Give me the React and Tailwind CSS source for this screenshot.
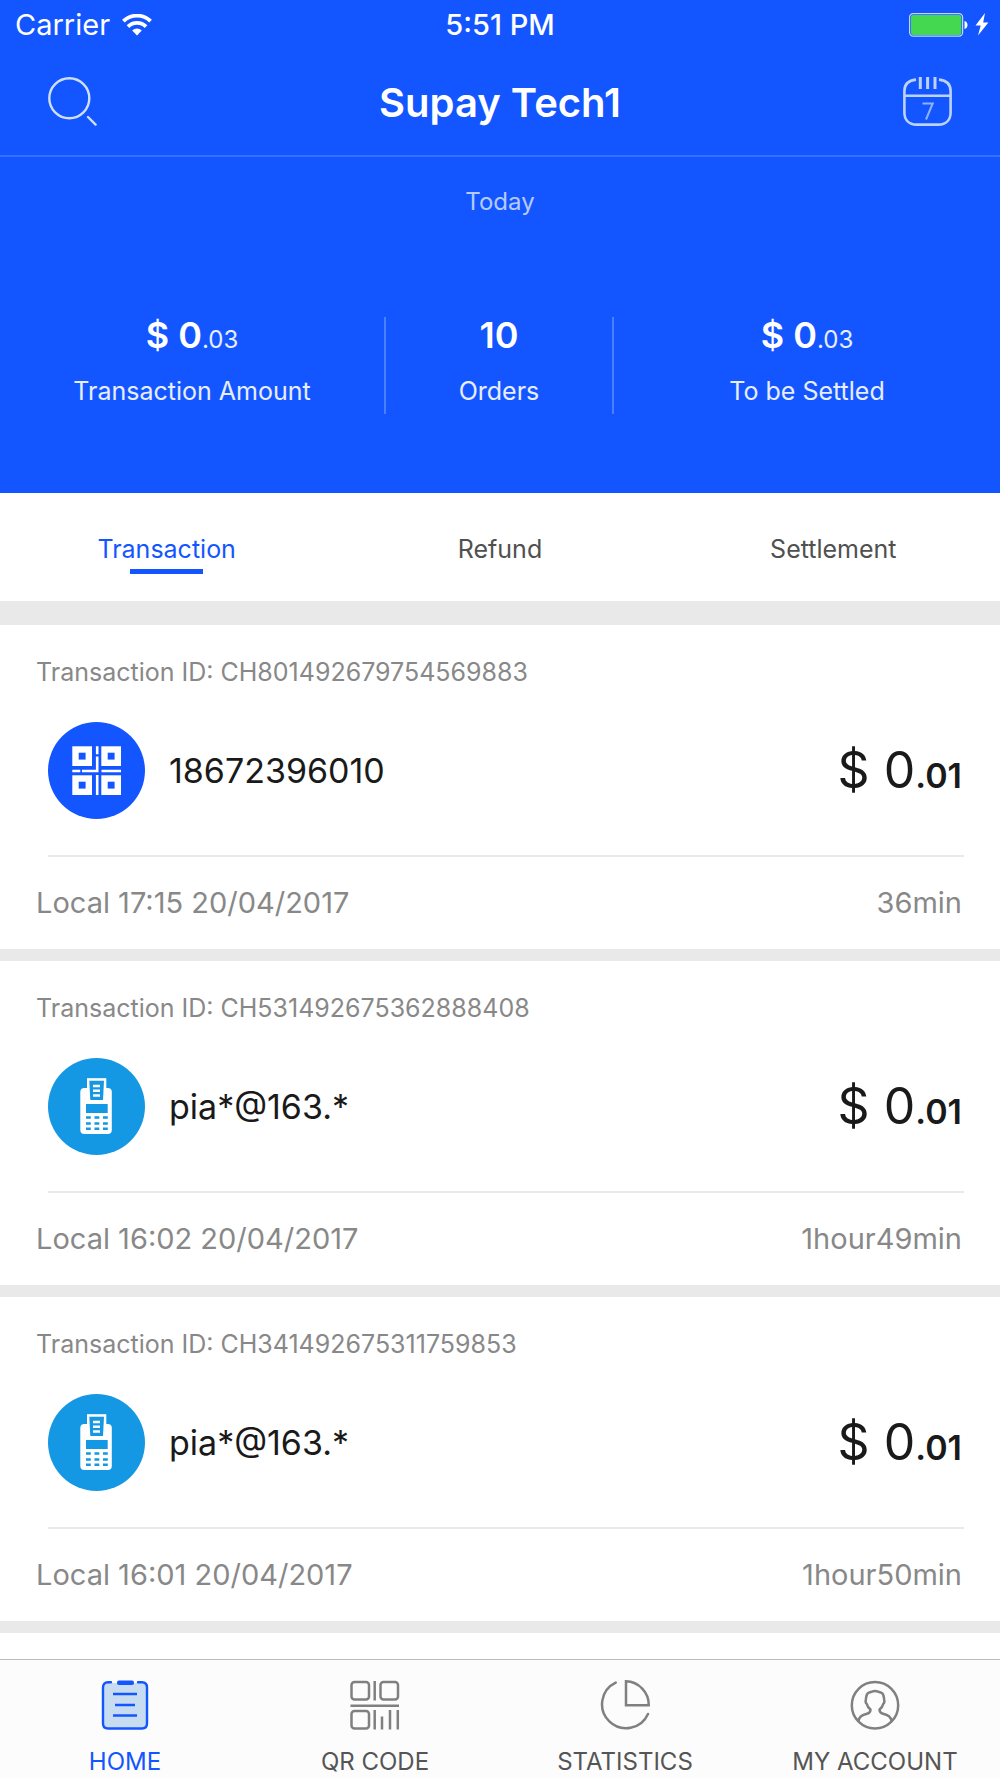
import { useState } from 'react'

const transactions = [
  { id: 'CH801492679754569883', type: 'qr', name: '18672396010', time: 'Local 17:15 20/04/2017', ago: '36min' },
  { id: 'CH531492675362888408', type: 'pos', name: 'pia*@163.*', time: 'Local 16:02 20/04/2017', ago: '1hour49min' },
  { id: 'CH341492675311759853', type: 'pos', name: 'pia*@163.*', time: 'Local 16:01 20/04/2017', ago: '1hour50min' },
]

function WifiIcon() {
  return (
    <svg className="w-[30px] h-[22px]" viewBox="0 0 30 22" fill="none" stroke="white" strokeWidth="3.8" aria-hidden="true">
      <path d="M1.4 7.2a19.4 19.4 0 0 1 27.2 0" />
      <path d="M6 12.6a12.8 12.8 0 0 1 18 0" />
      <path d="M15 21.5l-4.8-5a7 7 0 0 1 9.6 0z" fill="white" stroke="none" />
    </svg>
  )
}

function BatteryIcon() {
  return (
    <svg className="w-20 h-6" viewBox="0 0 80 24" fill="none" aria-hidden="true">
      <rect x="0.6" y="0.6" width="53" height="22.6" rx="3.6" stroke="white" strokeOpacity="0.75" strokeWidth="1.2" />
      <rect x="2" y="2" width="50.4" height="20" rx="2" fill="#44d851" />
      <path d="M55.5 8c4 .8 4 7.2 0 8z" fill="white" />
      <path d="M76 0L66.5 12.6h5.2L69 22.6l10.4-13h-5.2z" fill="white" />
    </svg>
  )
}

function SearchIcon() {
  return (
    <svg className="size-[49px]" viewBox="0 0 49 49" fill="none" stroke="#cfe0ff" strokeWidth="2.4" strokeLinecap="round" aria-hidden="true">
      <circle cx="21.3" cy="21.3" r="20" />
      <path d="M40 40l7.6 7.6" />
    </svg>
  )
}

function CalendarIcon() {
  return (
    <svg className="size-[49px]" viewBox="0 0 49 49" fill="none" stroke="#bcd2ff" strokeWidth="2.6" aria-hidden="true">
      <path d="M13 2.6C5.6 3.4 1.4 7.5 1.4 14v21.5C1.4 43 6 47.6 13.5 47.6h22C43 47.6 47.6 43 47.6 35.5V14c0-6.500-4.200-10.600-11.600-11.400" />
      <path d="M1.4 18.700h46.200" />
      <path d="M17.300 0v12M24.600 0v12M32 0v12" strokeWidth="3" />
      <path d="M19.500 26.500h10.200l-6.700 16" stroke="#8fb3ff" strokeWidth="2" />
    </svg>
  )
}

function QrBadge() {
  return (
    <svg className="size-[97px] shrink-0" viewBox="0 0 97 97" aria-hidden="true">
      <circle cx="48.5" cy="48.5" r="48.5" fill="#1356ff" />
      <g fill="none" stroke="white" strokeWidth="6.4">
        <rect x="27.5" y="27.5" width="13.3" height="13.3" />
        <rect x="56.500" y="27.5" width="13.3" height="13.3" />
        <rect x="27.5" y="56.500" width="13.3" height="13.3" />
        <rect x="56.500" y="56.500" width="13.3" height="13.3" />
      </g>
      <path d="M49.200 24.300v8M49.200 34.500v14.500H34M24.300 49h8M53.500 49H73M49.200 53v20" fill="none" stroke="white" strokeWidth="2.600" />
    </svg>
  )
}

function PosBadge() {
  return (
    <svg className="size-[97px] shrink-0" viewBox="0 0 97 97" aria-hidden="true">
      <circle cx="48.5" cy="48.5" r="48.5" fill="#1498e4" />
      <rect x="32.3" y="30" width="31.5" height="46" rx="4" fill="white" />
      <rect x="39" y="20.2" width="19.3" height="14" fill="white" />
      <path d="M41.3 22.800h14.700L55 42H42.300z" fill="#1498e4" />
      <path d="M45 28h7M45 32.700h7M45 37.500h7" stroke="white" strokeWidth="2.6" />
      <rect x="38" y="46" width="21.7" height="9" fill="#1498e4" />
      <path d="M38 59.500h22M38 65.500h22M38 70.700h22" stroke="#1498e4" strokeWidth="2.6" strokeDasharray="4.8 3.7" />
    </svg>
  )
}

function HomeIcon() {
  return (
    <svg className="size-[50px]" viewBox="0 0 50 50" fill="none" stroke="#1356ff" strokeWidth="2.400" aria-hidden="true">
      <rect x="3" y="3" width="44" height="46" rx="5" fill="#c8dcf1" stroke="none" />
      <path d="M11 2.200H8C4.500 2.200 3 4.500 3 7.500V43.500C3 47 4.800 48.500 8 48.500H42C45.200 48.500 47 47 47 43.500V7.500C47 4.500 45.500 2.200 42 2.200H38" strokeLinecap="round" />
      <rect x="17" y="0.5" width="17" height="4.6" rx="2" fill="#1356ff" stroke="none" />
      <path d="M13 14h24M15 25h20M13 35.500h24" />
    </svg>
  )
}

function QrIcon() {
  return (
    <svg className="size-[50px]" viewBox="0 0 50 50" fill="none" stroke="#808080" strokeWidth="2.500" aria-hidden="true">
      <rect x="1.5" y="2" width="17.5" height="17.5" rx="3" />
      <rect x="30.5" y="2" width="17.5" height="17.5" rx="3" />
      <rect x="1.5" y="31" width="17.5" height="17.5" rx="3" />
      <path d="M24.700 1v19.500M.5 25.700H49M24.700 30v19.500M32 36.500v13M40 30v19.500M47.800 30v19.500" />
    </svg>
  )
}

function StatsIcon() {
  return (
    <svg className="size-[50px]" viewBox="0 0 50 50" fill="none" stroke="#808080" strokeWidth="2.5" strokeLinecap="round" aria-hidden="true">
      <path d="M15.700 2.600A24 24 0 1 0 48 34" />
      <path d="M26 1.300V25.200H48.700A23.500 23.500 0 0 0 26 1.300z" />
    </svg>
  )
}

function AccountIcon() {
  return (
    <svg className="size-[50px]" viewBox="0 0 50 50" fill="none" stroke="#808080" strokeWidth="2.500" strokeLinejoin="round" strokeLinecap="round" aria-hidden="true">
      <circle cx="25" cy="25.300" r="23.200" />
      <path d="M8.500 41c.5-5 4-6.300 8.500-7.300 2.500-.6 3.500-1.700 3.500-4.200-2-1.500-3.200-3.200-3.700-5.500-1.200-.8-1.500-2-1-4.500.8-5.500 1.200-6.500 4.200-7.200 2-.3 2.500-1.300 5-1.300s3 1 5 1.300c3 .7 3.400 1.700 4.200 7.200.5 2.500.2 3.700-1 4.500-.5 2.300-1.700 4-3.700 5.500 0 2.500 1 3.600 3.500 4.200 4.500 1 8 2.300 8.500 7.300" />
    </svg>
  )
}

const navItems = [
  { label: 'HOME', Icon: HomeIcon },
  { label: 'QR CODE', Icon: QrIcon },
  { label: 'STATISTICS', Icon: StatsIcon },
  { label: 'MY ACCOUNT', Icon: AccountIcon },
]

function Header() {
  return (
    <header className="bg-[#1356ff] text-white">
      <div className="h-[50px] px-[15px] grid grid-cols-3 items-center text-[29px] leading-8">
        <div className="flex items-center gap-3">
          <span>Carrier</span>
          <WifiIcon />
        </div>
        <span className="text-center font-medium">5:51 PM</span>
        <div className="flex justify-end -mr-1">
          <BatteryIcon />
        </div>
      </div>
      <div className="h-[107px] px-12 pb-[2px] flex items-center justify-between border-b-2 border-[#3570ff]">
        <button type="button" aria-label="Search">
          <SearchIcon />
        </button>
        <h1 className="pt-[2px] text-[40px] leading-[48px] font-semibold">Supay Tech1</h1>
        <button type="button" aria-label="Pick a date">
          <CalendarIcon />
        </button>
      </div>
    </header>
  )
}

function Stat({ value, cents, label }) {
  return (
    <div className="h-[97px] flex flex-col items-center justify-between pb-[7px]">
      <p className="text-[36px] leading-9 font-semibold">
        {value}
        {cents && <span className="text-2xl leading-9 font-normal text-white/90">{cents}</span>}
      </p>
      <p className="text-[25px] leading-8 text-white/90">{label}</p>
    </div>
  )
}

function Summary() {
  return (
    <section className="bg-[#1356ff] text-white pt-[29px] pb-[79px]">
      <p className="text-center text-2xl text-white/70">Today</p>
      <div className="mt-[99px] grid grid-cols-[1fr_228px_1fr] divide-x-2 divide-[#4a80ff]">
        <Stat value="$ 0" cents=".03" label="Transaction Amount" />
        <Stat value="10" label="Orders" />
        <Stat value="$ 0" cents=".03" label="To be Settled" />
      </div>
    </section>
  )
}

function Tabs({ active, onChange }) {
  return (
    <div role="tablist" className="h-[108px] grid grid-cols-3 bg-white">
      {['Transaction', 'Refund', 'Settlement'].map((tab) => (
        <button
          key={tab}
          type="button"
          role="tab"
          aria-selected={active === tab}
          onClick={() => onChange(tab)}
          className={`flex flex-col items-center gap-1 pt-10 text-[25px] leading-8 ${active === tab ? 'text-[#1356ff]' : 'text-[#505050]'}`}
        >
          {tab}
          {active === tab && <span className="w-[73px] h-[5px] bg-[#1356ff]" />}
        </button>
      ))}
    </div>
  )
}

function TransactionCard({ id, type, name, time, ago }) {
  return (
    <li className="bg-white h-[324px] px-9">
      <p className="pt-[31px] text-[25px] leading-8 text-[#888888]">Transaction ID: {id}</p>
      <div className="ml-3 mt-[34px] pb-9 flex items-center border-b-2 border-[#e9e9e9]">
        {type === 'qr' ? <QrBadge /> : <PosBadge />}
        <span className="ml-6 text-[34px] leading-10 text-[#1a1a1a]">{name}</span>
        <span className="ml-auto pt-1 pr-[2px] text-[50px] leading-[60px] text-[#1a1a1a]">
          $ 0<span className="text-[34px] font-semibold">.01</span>
        </span>
      </div>
      <div className="pt-7 pr-[2px] flex justify-between text-[29px] leading-9 text-[#888888]">
        <span>{time}</span>
        <span>{ago}</span>
      </div>
    </li>
  )
}

export default function App() {
  const [tab, setTab] = useState('Transaction')
  const [page, setPage] = useState('HOME')

  return (
    <div className="min-h-screen flex flex-col bg-white font-['Inter',sans-serif]">
      <Header />
      <main className="flex-1">
        <Summary />
        <Tabs active={tab} onChange={setTab} />
        <ul className="bg-[#e9e9e9] pt-6 pb-3 flex flex-col gap-3">
          {transactions.map((t) => (
            <TransactionCard key={t.id} {...t} />
          ))}
        </ul>
      </main>
      <nav className="sticky bottom-0 h-[119px] grid grid-cols-4 bg-[#fcfcfc] border-t border-[#bcbcbc]">
        {navItems.map(({ label, Icon }) => (
          <button
            key={label}
            type="button"
            onClick={() => setPage(label)}
            className={`flex flex-col items-center justify-between pt-5 text-2xl ${page === label ? 'text-[#1356ff]' : 'text-[#555555]'}`}
          >
            <Icon />
            {label}
          </button>
        ))}
      </nav>
    </div>
  )
}
